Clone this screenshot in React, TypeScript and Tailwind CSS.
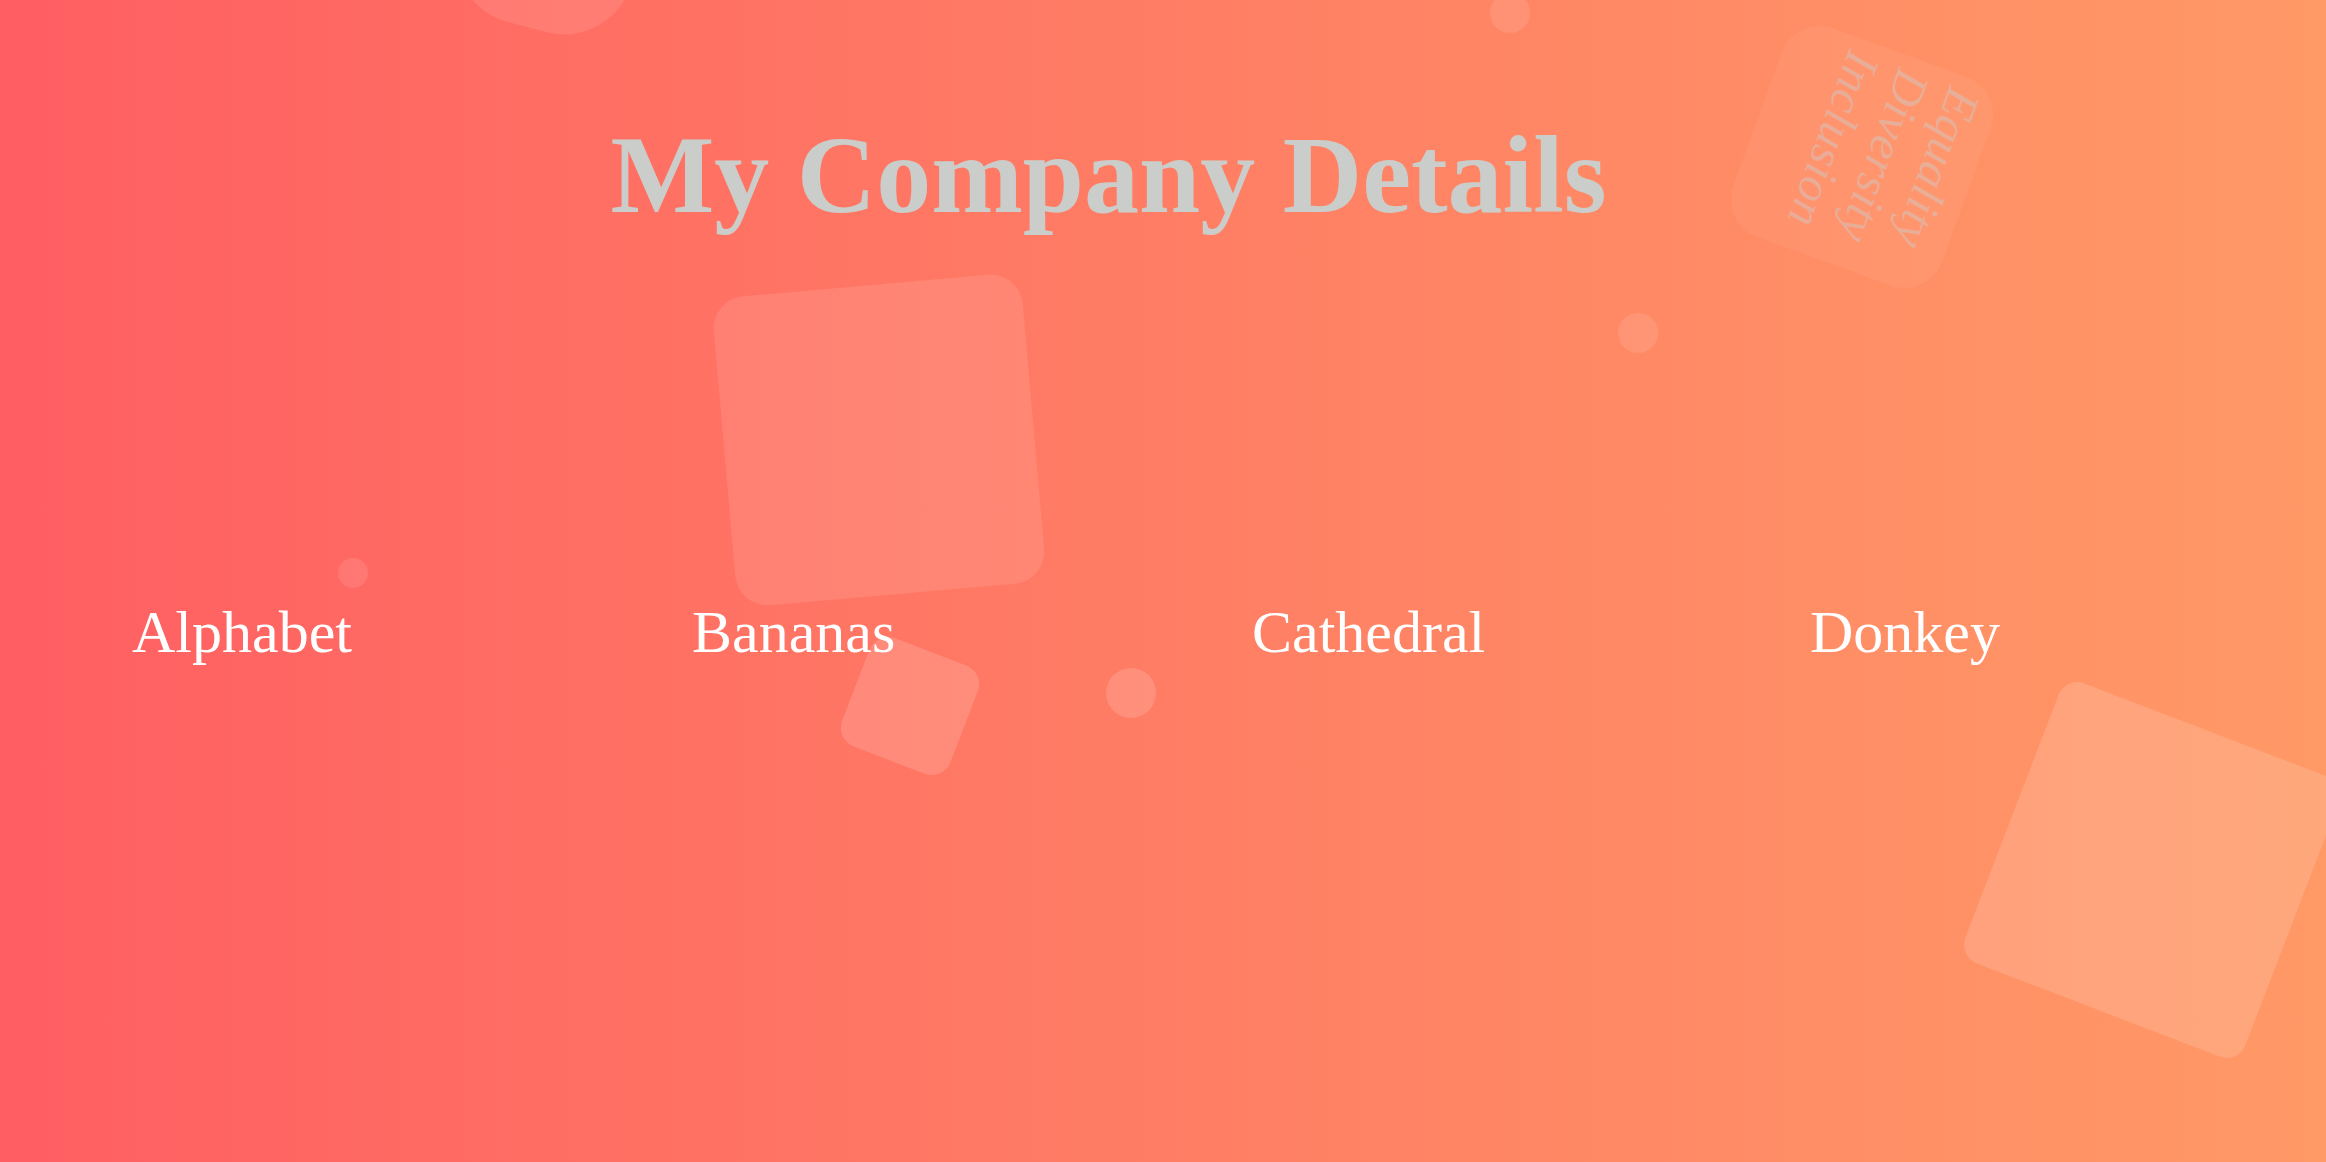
import React from "react";

export default function App() {
  return (
    <div className="relative w-full h-[1162px] overflow-hidden bg-linear-to-r from-[#ff5e62] to-[#ff9966] font-['Liberation_Serif','Times_New_Roman',serif]">
      {/* decorative shapes */}
      <div className="absolute left-[460px] top-[-150px] w-[180px] h-[180px] rounded-[70px] rotate-[15deg] bg-white/10" />
      <div className="absolute left-[724px] top-[285px] w-[310px] h-[310px] rounded-[32px] rotate-[-5deg] bg-white/10" />
      <div className="absolute left-[852px] top-[648px] w-[116px] h-[116px] rounded-[20px] rotate-[21deg] bg-white/15" />
      <div className="absolute left-[2002px] top-[720px] w-[300px] h-[300px] rounded-[20px] rotate-[21deg] bg-white/15" />
      <div className="absolute left-[1490px] top-[-7px] w-[40px] h-[40px] rounded-full bg-white/10" />
      <div className="absolute left-[1618px] top-[313px] w-[40px] h-[40px] rounded-full bg-white/10" />
      <div className="absolute left-[1106px] top-[668px] w-[50px] h-[50px] rounded-full bg-white/15" />
      <div className="absolute left-[338px] top-[558px] w-[30px] h-[30px] rounded-full bg-white/10" />
      <div className="absolute left-[1751px] top-[46px] w-[222px] h-[222px] rounded-[40px] rotate-[110deg] bg-white/5 pt-[10px] pl-[13px]">
        <div className="flex flex-col italic text-[49px] leading-[53.5px] text-[#cccccc]/45">
          <span>Equality</span>
          <span>Diversity</span>
          <span>Inclusion</span>
        </div>
      </div>

      {/* content */}
      <div className="relative z-10 flex flex-col">
        <h1 className="mt-[120px] pr-[109px] text-center text-[110px] leading-none font-bold text-[#cbcdca]">
          My Company Details
        </h1>
        <div className="mt-[372px] pl-[132px] grid grid-cols-[560px_560px_558px_auto] text-[60px] leading-none text-white">
          <div>Alphabet</div>
          <div>Bananas</div>
          <div>Cathedral</div>
          <div>Donkey</div>
        </div>
      </div>
    </div>
  );
}
